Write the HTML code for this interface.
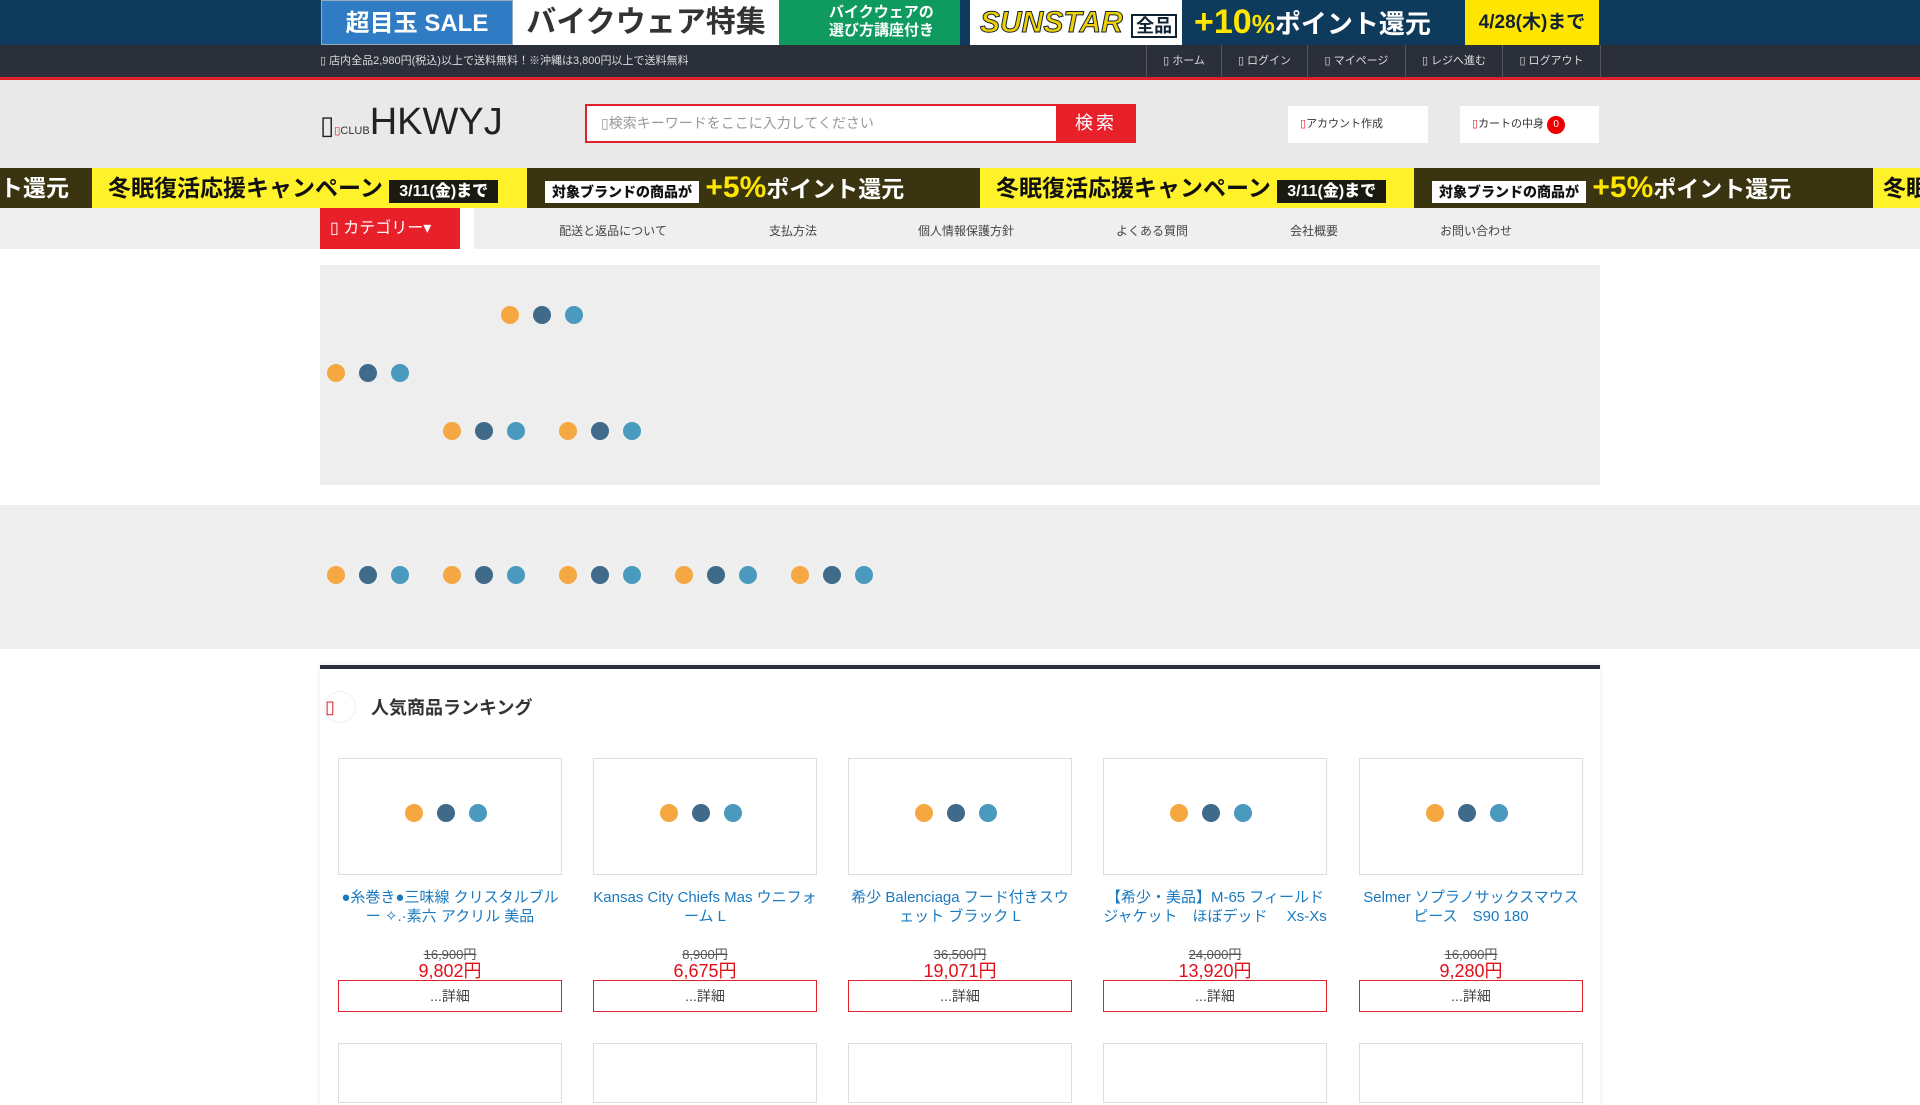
<!DOCTYPE html>
<html><head><meta charset="utf-8"><style>
*{margin:0;padding:0;box-sizing:border-box}
body{width:1920px;height:1080px;overflow:hidden;background:#fff;font-family:"Liberation Sans","Noto Sans CJK JP",sans-serif;position:relative}
.abs{position:absolute}
.dots{position:absolute;display:flex;gap:14px}
.dots i{display:block;width:18px;height:18px;border-radius:50%}
.dots i:nth-child(1){background:#f5a742}.dots i:nth-child(2){background:#3f6a8a}.dots i:nth-child(3){background:#4a9abf}
.nav a{position:absolute;top:222px;font-size:12px;color:#444;transform:translateX(-50%);white-space:nowrap}
.card{position:absolute;width:224px}
.card .img{height:117px;border:1px solid #ddd;position:relative}
.card .t{text-align:center;color:#1a7ac0;font-size:15px;line-height:19px;margin-top:13px;height:59px}
.card .o{text-align:center;color:#555;font-size:13px;text-decoration:line-through;line-height:15px}
.card .n{text-align:center;color:#e0101a;font-size:18px;line-height:18px}
.card .b{height:32px;border:1px solid #e0202a;text-align:center;line-height:30px;font-size:14px;color:#444}
.seg{position:absolute;top:0;height:40px;line-height:40px;font-weight:bold;font-size:23px;overflow:hidden;white-space:nowrap}
.y{background:#fff22a;color:#111;padding-left:16px}
.d{background:#3a3510;color:#fff;padding-left:18px}
</style></head><body>
<!-- top banner -->
<div class="abs" style="left:0;top:0;width:1920px;height:45px;background:#0e3a5c"></div>
<div class="abs" style="left:321px;top:0;width:192px;height:45px;background:#2f7bc4;color:#fff;font-weight:bold;font-size:24px;line-height:45px;text-align:center;border:1px solid #9ab">超目玉 SALE</div>
<div class="abs" style="left:513px;top:0;width:266px;height:45px;background:#fff;color:#333;font-weight:bold;font-size:30px;line-height:45px;text-align:center">バイクウェア特集</div>
<div class="abs" style="left:779px;top:0;width:181px;height:45px;background:#0f9a5f;color:#fff;font-weight:bold;font-size:15px;line-height:18px;padding:4px 0 0 50px">バイクウェアの<br>選び方講座付き</div>
<div class="abs" style="left:970px;top:0;width:212px;height:45px;background:#fff;color:#f0d000;font-weight:bold;font-style:italic;font-size:30px;line-height:45px;padding-left:10px;-webkit-text-stroke:1px #123">SUNSTAR <span style="font-style:normal;font-size:18px;color:#123;-webkit-text-stroke:0;border:2px solid #123;padding:0 3px">全品</span></div>
<div class="abs" style="left:1182px;top:0;width:283px;height:45px;background:#0e3a5c;color:#fff;font-weight:bold;font-size:26px;line-height:45px;padding-left:12px"><span style="color:#ffe600;font-size:34px">+10</span><span style="color:#ffe600">%</span>ポイント還元</div>
<div class="abs" style="left:1465px;top:0;width:134px;height:45px;background:#ffe600;color:#123;font-weight:bold;font-size:19px;line-height:45px;text-align:center">4/28(木)まで</div>
<!-- top bar -->
<div class="abs" style="left:0;top:45px;width:1920px;height:32px;background:#2a2f3a"></div>
<div class="abs" style="left:0;top:77px;width:1920px;height:3px;background:#e0202a"></div>
<div class="abs" style="left:320px;top:45px;line-height:32px;font-size:11px;color:#ddd">▯ 店内全品2,980円(税込)以上で送料無料！※沖縄は3,800円以上で送料無料</div>
<div class="abs" style="left:1146px;top:45px;height:32px;display:flex;font-size:11px;color:#ddd;line-height:32px;border-left:1px solid #555">
<div style="width:75px;text-align:center;border-right:1px solid #555">▯ ホーム</div>
<div style="width:86px;text-align:center;border-right:1px solid #555">▯ ログイン</div>
<div style="width:98px;text-align:center;border-right:1px solid #555">▯ マイページ</div>
<div style="width:97px;text-align:center;border-right:1px solid #555">▯ レジへ進む</div>
<div style="width:98px;text-align:center;border-right:1px solid #555">▯ ログアウト</div></div>
<!-- header -->
<div class="abs" style="left:0;top:80px;width:1920px;height:88px;background:#e9e9e9"></div>
<div class="abs" style="left:320px;top:100px;font-size:38px;color:#222;line-height:44px"><span style="font-size:26px">▯</span><span style="font-size:11px;color:#333"><span style="color:#e0202a">▯</span>CLUB</span>HKWYJ</div>
<div class="abs" style="left:585px;top:104px;width:471px;height:39px;background:#fff;border:2px solid #e0202a;border-right:0;font-size:14px;color:#999;line-height:35px;padding-left:14px">▯検索キーワードをここに入力してください</div>
<div class="abs" style="left:1056px;top:104px;width:80px;height:39px;background:#e8202a;color:#fff;font-size:18px;line-height:39px;text-align:center;letter-spacing:3px">検索</div>
<div class="abs" style="left:1288px;top:106px;width:140px;height:37px;background:#fff;font-size:11px;color:#333;line-height:37px;padding-left:12px"><span style="color:#e0202a">▯</span>アカウント作成</div>
<div class="abs" style="left:1460px;top:106px;width:139px;height:37px;background:#fff;font-size:11px;color:#333;line-height:37px;padding-left:12px"><span style="color:#e0202a">▯</span>カートの中身 <span style="display:inline-block;width:18px;height:18px;border-radius:50%;background:#e00;color:#fff;text-align:center;line-height:18px;font-size:10px">0</span></div>
<!-- campaign strip -->
<div class="abs" style="left:0;top:168px;width:1920px;height:40px;background:#3a3510;overflow:hidden">
<div class="seg d" style="left:0;width:92px;padding-left:0">ト還元</div>
<div class="seg y" style="left:92px;width:435px">冬眠復活応援キャンペーン <b style="background:#1a1a10;color:#fff;font-size:16px;padding:3px 10px">3/11(金)まで</b></div>
<div class="seg d" style="left:527px;width:453px"><b style="background:#fff;color:#111;font-size:14px;padding:3px 7px">対象ブランドの商品が</b> <span style="color:#ffe600;font-size:30px">+5%</span>ポイント還元</div>
<div class="seg y" style="left:980px;width:434px">冬眠復活応援キャンペーン <b style="background:#1a1a10;color:#fff;font-size:16px;padding:3px 10px">3/11(金)まで</b></div>
<div class="seg d" style="left:1414px;width:459px"><b style="background:#fff;color:#111;font-size:14px;padding:3px 7px">対象ブランドの商品が</b> <span style="color:#ffe600;font-size:30px">+5%</span>ポイント還元</div>
<div class="seg y" style="left:1873px;width:60px;padding-left:10px">冬眠</div>
</div>
<!-- nav -->
<div class="abs" style="left:0;top:208px;width:1920px;height:41px;background:#efefef"></div>
<div class="abs" style="left:460px;top:208px;width:14px;height:41px;background:#fff"></div>
<div class="abs" style="left:320px;top:208px;width:140px;height:41px;background:#e8202a;color:#fff;font-size:16px;line-height:41px;padding-left:10px">▯ カテゴリー▾</div>
<div class="nav"><a style="left:613px">配送と返品について</a><a style="left:793px">支払方法</a><a style="left:966px">個人情報保護方針</a><a style="left:1152px">よくある質問</a><a style="left:1314px">会社概要</a><a style="left:1476px">お問い合わせ</a></div>
<!-- slider -->
<div class="abs" style="left:320px;top:265px;width:1280px;height:220px;background:#eeeeee"></div>
<div class="dots" style="left:501px;top:306px"><i></i><i></i><i></i></div>
<div class="dots" style="left:327px;top:364px"><i></i><i></i><i></i></div>
<div class="dots" style="left:443px;top:422px"><i></i><i></i><i></i></div>
<div class="dots" style="left:559px;top:422px"><i></i><i></i><i></i></div>
<div class="abs" style="left:0;top:505px;width:1920px;height:144px;background:#efefef"></div>
<div class="dots" style="left:327px;top:566px"><i></i><i></i><i></i></div>
<div class="dots" style="left:443px;top:566px"><i></i><i></i><i></i></div>
<div class="dots" style="left:559px;top:566px"><i></i><i></i><i></i></div>
<div class="dots" style="left:675px;top:566px"><i></i><i></i><i></i></div>
<div class="dots" style="left:791px;top:566px"><i></i><i></i><i></i></div>
<!-- ranking -->
<div class="abs" style="left:320px;top:665px;width:1280px;height:440px;background:#fff;border-top:4px solid #2a2f3a;box-shadow:0 0 4px rgba(0,0,0,.1)"></div>
<div class="abs" style="left:324px;top:691px;width:32px;height:32px;border-radius:50%;border:1px solid #eee"></div>
<div class="abs" style="left:325px;top:697px;color:#e0202a;font-size:18px">▯</div>
<div class="abs" style="left:371px;top:694px;font-size:18px;font-weight:bold;color:#333">人気商品ランキング</div>

<div class="card" style="left:338px;top:758px"><div class="img"><div class="dots" style="left:66px;top:45px"><i></i><i></i><i></i></div></div><div class="t">●糸巻き●三味線 クリスタルブルー ✧.·素六 アクリル 美品</div><div class="o">16,900円</div><div class="n">9,802円</div><div class="b">...詳細</div></div>
<div class="card" style="left:593px;top:758px"><div class="img"><div class="dots" style="left:66px;top:45px"><i></i><i></i><i></i></div></div><div class="t">Kansas City Chiefs Mas ウニフォーム L</div><div class="o">8,900円</div><div class="n">6,675円</div><div class="b">...詳細</div></div>
<div class="card" style="left:848px;top:758px"><div class="img"><div class="dots" style="left:66px;top:45px"><i></i><i></i><i></i></div></div><div class="t">希少 Balenciaga フード付きスウェット ブラック L</div><div class="o">36,500円</div><div class="n">19,071円</div><div class="b">...詳細</div></div>
<div class="card" style="left:1103px;top:758px"><div class="img"><div class="dots" style="left:66px;top:45px"><i></i><i></i><i></i></div></div><div class="t">【希少・美品】M-65 フィールドジャケット　ほぼデッド　 Xs-Xs</div><div class="o">24,000円</div><div class="n">13,920円</div><div class="b">...詳細</div></div>
<div class="card" style="left:1359px;top:758px"><div class="img"><div class="dots" style="left:66px;top:45px"><i></i><i></i><i></i></div></div><div class="t">Selmer ソプラノサックスマウスピース　S90 180</div><div class="o">16,000円</div><div class="n">9,280円</div><div class="b">...詳細</div></div>

<div class="abs" style="left:338px;top:1043px;width:224px;height:60px;border:1px solid #ddd"></div>
<div class="abs" style="left:593px;top:1043px;width:224px;height:60px;border:1px solid #ddd"></div>
<div class="abs" style="left:848px;top:1043px;width:224px;height:60px;border:1px solid #ddd"></div>
<div class="abs" style="left:1103px;top:1043px;width:224px;height:60px;border:1px solid #ddd"></div>
<div class="abs" style="left:1359px;top:1043px;width:224px;height:60px;border:1px solid #ddd"></div>
</body></html>
